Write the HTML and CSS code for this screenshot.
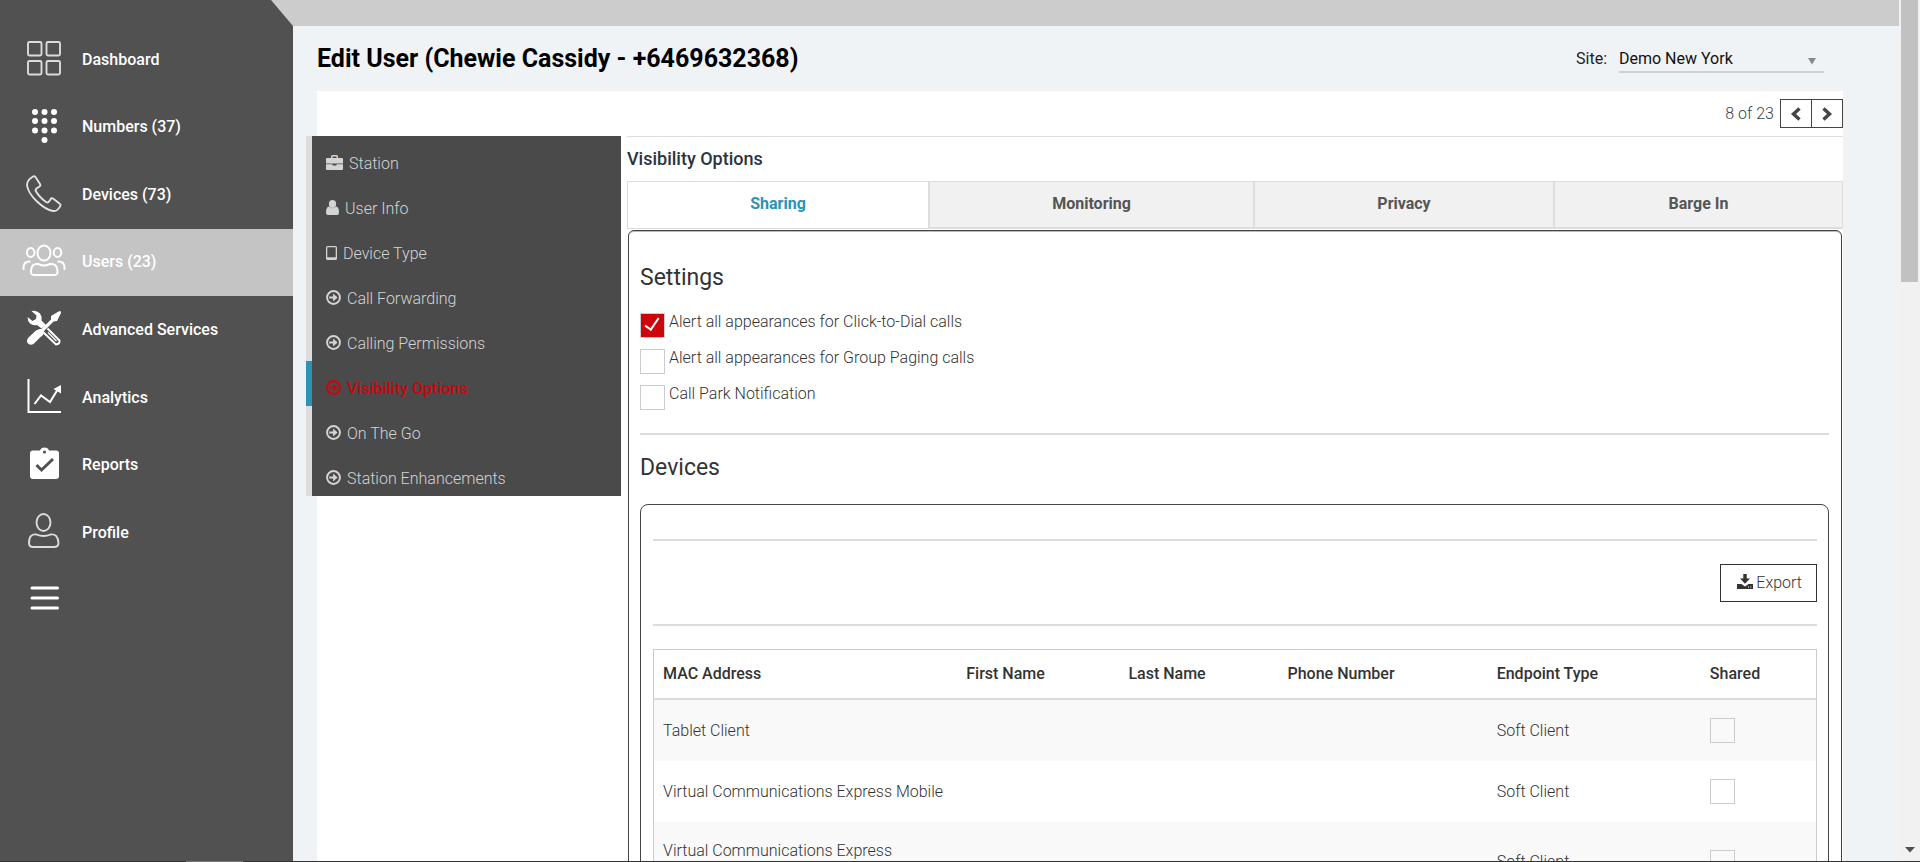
FILE: index.html
```html
<!DOCTYPE html>
<html lang="en">
<head>
<meta charset="utf-8">
<title>Edit User</title>
<link rel="stylesheet" href="styles.css">
</head>
<body>
<svg class="defs" aria-hidden="true">
  <symbol id="circle-arrow" viewBox="0 0 14 14">
    <circle cx="7" cy="7" r="6" fill="none" stroke="currentColor" stroke-width="1.8"/>
    <path d="M3 6h3.600V3.200L10.800 7l-4.200 3.800V8H3z" fill="currentColor"/>
  </symbol>
</svg>
<div class="app">
  <nav class="sidebar" aria-label="Main">
    <ul class="nav">
      <li><a class="nav-link" href="#">
        <svg viewBox="0 0 44 36"><g fill="none" stroke="#dcdcdc" stroke-width="1.9"><rect x="6" y="2" width="13.500" height="13.500" rx="1.5"/><rect x="24.500" y="2" width="13.500" height="13.500" rx="1.5"/><rect x="6" y="21" width="13.500" height="13.500" rx="1.5"/><rect x="24.500" y="21" width="13.500" height="13.500" rx="1.5"/></g></svg>
        Dashboard</a></li>
      <li><a class="nav-link" href="#">
        <svg viewBox="0 0 44 36"><g fill="#fff"><circle cx="13" cy="4" r="3"/><circle cx="22.500" cy="4" r="3"/><circle cx="32" cy="4" r="3"/><circle cx="13" cy="13" r="3"/><circle cx="22.500" cy="13" r="3"/><circle cx="32" cy="13" r="3"/><circle cx="13" cy="22.500" r="3"/><circle cx="22.500" cy="22.500" r="3"/><circle cx="32" cy="22.500" r="3"/><circle cx="22.500" cy="32" r="3"/></g></svg>
        Numbers (37)</a></li>
      <li><a class="nav-link" href="#">
        <svg viewBox="0 0 44 36"><path d="M11 1.500Q5 5 5 10Q6 18 15 26.500T31 36Q36 36.500 38.500 30.500Q39 29.500 37.500 28.500L31 23.500Q29.500 22.500 28.500 24.500L26.500 27Q25.500 28 24 27Q17 22 13.500 15.500Q13.500 14.500 14.500 13.500L17.500 11.500Q19 10.500 18 9L13.500 2Q12.500 .8 11 1.500Z" fill="none" stroke="#e2e2e2" stroke-width="1.900"/></svg>
        Devices (73)</a></li>
      <li><a class="nav-link active" href="#" aria-current="page">
        <svg viewBox="0 0 44 36"><g fill="none" stroke="#fff" stroke-width="2"><ellipse cx="22" cy="10" rx="6.500" ry="7.500"/><ellipse cx="8.700" cy="9.500" rx="3.800" ry="4.500"/><ellipse cx="35.500" cy="9.500" rx="3.800" ry="4.500"/><path d="M16 21Q9.500 20 9 28Q8.500 32 12 32H32.500Q36 32 35.500 28Q35 20 28 21Q22 24 16 21ZM1.500 27V24Q2 18 8.500 18.500M42.500 27V24Q42 18 35.500 18.500"/></g></svg>
        Users (23)</a></li>
      <li><a class="nav-link" href="#">
        <svg viewBox="0 0 44 36"><path d="M9.500 1Q14.500 0 18 3.500Q20.500 7 19.500 10.500L24 15L19.500 18.500L15 15Q11 16 8 13.500Q5.500 11 5.500 7L10.500 11L14 9L14.500 5.500Z" fill="#fff"/><path d="M25.500 18.500L37.500 30.500Q38 34 34 34.500L21.500 22.500" fill="none" stroke="#fff" stroke-width="2"/><path d="M26 22.500L34.500 31" stroke="#fff" stroke-width="1.300"/><path d="M38.500 1L39 3L35 11L31.500 11.500L22 21Q22 25 18.500 27L11.500 34Q8 36 5.500 33Q4 30 7 27L14 20.500Q17 18.500 19.500 19L29 9.500V6L36.500 1.500Z" fill="#fff"/></svg>
        Advanced Services</a></li>
      <li><a class="nav-link" href="#">
        <svg viewBox="0 0 44 36"><path d="M6.500 1V34H39" fill="none" stroke="#fff" stroke-width="2"/><path d="M12.500 26L19 17.500L28 24L36 11" fill="none" stroke="#fff" stroke-width="2"/><path d="M39 7V15.500L31.500 11Z" fill="#fff"/></svg>
        Analytics</a></li>
      <li><a class="nav-link" href="#">
        <svg viewBox="0 0 44 36"><path d="M11 4.500H18Q19 1.500 22.500 1.500T27 4.500H34Q37 4.500 37 7.500V30Q37 33 34 33H11Q8 33 8 30V7.500Q8 4.500 11 4.500Z" fill="#fff"/><circle cx="22.500" cy="6" r="1.600" fill="#515151"/><path d="M14.500 19L19.500 24L31 13" fill="none" stroke="#515151" stroke-width="3"/></svg>
        Reports</a></li>
      <li><a class="nav-link" href="#">
        <svg viewBox="0 0 44 36"><g fill="none" stroke="#dcdcdc" stroke-width="1.9"><ellipse cx="21.500" cy="9.500" rx="7" ry="8.500"/><path d="M14.500 21.500Q7 20.500 7 30Q7 34 11 34H32Q36.500 34 36.500 30Q36 20.500 28.500 21.500Q21.500 24.500 14.500 21.500Z"/></g></svg>
        Profile</a></li>
      <li><button class="nav-link" type="button" aria-label="Menu">
        <svg viewBox="0 0 44 36"><path d="M10 7H35.500M10 17H35.500M10 27H35.500" stroke="#fff" stroke-width="3" stroke-linecap="round"/></svg></button></li>
    </ul>
  </nav>

  <div class="page">
    <div class="topband"></div>
    <header class="page-head">
      <h1>Edit User (Chewie Cassidy - +6469632368)</h1>
      <div class="site">
        <label for="site">Site:</label>
        <div class="site-box">
          <select id="site"><option>Demo New York</option></select>
          <svg viewBox="0 0 8 8"><path d="M0 1H8L4 7.500Z" fill="#888"/></svg>
        </div>
      </div>
    </header>

    <main class="panel">
      <div class="pager">
        <span>8 of 23</span>
        <div class="pager-buttons">
          <button type="button" aria-label="Previous"><svg viewBox="0 0 12 14"><path d="M9.500 1.500L3.500 7L9.500 12.500" fill="none" stroke="#444" stroke-width="3.400"/></svg></button><button type="button" aria-label="Next"><svg viewBox="0 0 12 14"><path d="M2.500 1.500L8.500 7L2.500 12.500" fill="none" stroke="#444" stroke-width="3.400"/></svg></button>
        </div>
      </div>
      <div class="columns">
        <nav class="submenu" aria-label="User settings">
          <a href="#"><svg class="w17" viewBox="0 0 17 15"><path d="M1 3H5V1.500Q5 0 6.500 0H10.500Q12 0 12 1.500V3H16Q17 3 17 4V8.500H0V4Q0 3 1 3ZM6.500 3H10.500V1.500H6.500ZM0 9.300H6.500V10.500H10.500V9.300H17V14Q17 15 16 15H1Q0 15 0 14Z" fill="currentColor" fill-rule="evenodd"/></svg>Station</a>
          <a href="#"><svg class="w13" viewBox="0 0 13 15"><ellipse cx="6.500" cy="4" rx="3.600" ry="4" fill="currentColor"/><path d="M3 6.500Q6.500 10 10 6.500Q13 7 13 12.500Q13 15 11 15H2Q0 15 0 12.500Q0 7 3 6.500Z" fill="currentColor"/></svg>User Info</a>
          <a href="#"><svg class="w11" viewBox="0 0 11 14"><path d="M1.500 0H9.500Q11 0 11 1.500V12.500Q11 14 9.500 14H1.500Q0 14 0 12.500V1.500Q0 0 1.500 0ZM1.300 1.300V11.300H9.700V1.300Z" fill="currentColor" fill-rule="evenodd"/></svg>Device Type</a>
          <a href="#"><svg class="w15" viewBox="0 0 14 14"><use href="#circle-arrow"/></svg>Call Forwarding</a>
          <a href="#"><svg class="w15" viewBox="0 0 14 14"><use href="#circle-arrow"/></svg>Calling Permissions</a>
          <a href="#" class="active" aria-current="true"><svg class="w15" viewBox="0 0 14 14"><use href="#circle-arrow"/></svg>Visibility Options</a>
          <a href="#"><svg class="w15" viewBox="0 0 14 14"><use href="#circle-arrow"/></svg>On The Go</a>
          <a href="#"><svg class="w15" viewBox="0 0 14 14"><use href="#circle-arrow"/></svg>Station Enhancements</a>
        </nav>

        <section class="content">
          <h2>Visibility Options</h2>
          <div class="tabs" role="tablist">
            <button type="button" role="tab" aria-selected="true">Sharing</button>
            <button type="button" role="tab" aria-selected="false">Monitoring</button>
            <button type="button" role="tab" aria-selected="false">Privacy</button>
            <button type="button" role="tab" aria-selected="false">Barge In</button>
          </div>
          <div class="box outer">
            <h3>Settings</h3>
            <div class="checks">
              <div class="check"><input type="checkbox" id="c1" checked><label for="c1">Alert all appearances for Click-to-Dial calls</label></div>
              <div class="check"><input type="checkbox" id="c2"><label for="c2">Alert all appearances for Group Paging calls</label></div>
              <div class="check"><input type="checkbox" id="c3"><label for="c3">Call Park Notification</label></div>
            </div>
            <hr>
            <h3>Devices</h3>
            <div class="box inner">
              <hr>
              <div class="actions">
                <button class="export" type="button"><svg viewBox="0 0 16 15"><path d="M6.300 0H9.700V4.500H13L8 9.800L3 4.500H6.300ZM0 10H4.500L8 12.500L11.500 10H16V15H0Z" fill="#333"/><path d="M11 13h1M13.300 13h1" stroke="#fff"/></svg>Export</button>
              </div>
              <hr>
              <table>
                <colgroup><col class="c-mac"><col class="c-first"><col class="c-last"><col class="c-phone"><col class="c-type"><col class="c-shared"></colgroup>
                <thead><tr><th>MAC Address</th><th>First Name</th><th>Last Name</th><th>Phone Number</th><th>Endpoint Type</th><th>Shared</th></tr></thead>
                <tbody>
                  <tr><td>Tablet Client</td><td></td><td></td><td></td><td>Soft Client</td><td><input type="checkbox" aria-label="Shared"></td></tr>
                  <tr><td>Virtual Communications Express Mobile</td><td></td><td></td><td></td><td>Soft Client</td><td><input type="checkbox" aria-label="Shared"></td></tr>
                  <tr><td>Virtual Communications Express<br>&nbsp;</td><td></td><td></td><td></td><td>Soft Client</td><td><input type="checkbox" aria-label="Shared"></td></tr>
                </tbody>
              </table>
            </div>
          </div>
        </section>
      </div>
    </main>
  </div>

  <div class="scrollbar" aria-hidden="true">
    <div class="thumb"></div>
    <svg viewBox="0 0 10 6"><path d="M0 0H10L5 5.500Z" fill="#505050"/></svg>
  </div>
  <div class="bottom-line"><div></div></div>
</div>
</body>
</html>
```

FILE: styles.css
```css
* { box-sizing: border-box; }

body {
  margin: 0;
  overflow: hidden;
  background: #eff3f6;
  color: #333;
  font: 300 16px/24px Roboto, "Liberation Sans", sans-serif;
}

h1, h2, h3, ul { margin: 0; padding: 0; }
ul { list-style: none; }
a { color: inherit; text-decoration: none; }
button, select { font: inherit; color: inherit; background: none; border: 0; border-radius: 0; padding: 0; }
svg { display: block; flex: none; }
.defs { display: none; }

.app {
  display: grid;
  grid-template-columns: 293px 1fr 21px;
  grid-template-rows: minmax(0, 1fr) 1px;
  height: 100vh;
  overflow: hidden;
}

/* Sidebar */
.sidebar {
  z-index: 1;
  padding-top: 26px;
  background: #515151;
  clip-path: polygon(0 0, 271px 0, 293px 26px, 100% 100%, 0 100%);
}
.nav { display: grid; grid-template-rows: repeat(9, 1fr); height: 608px; }
.nav-link {
  display: flex;
  align-items: center;
  gap: 16px;
  width: 100%;
  height: 100%;
  padding-left: 22px;
  color: #fff;
  font-weight: 500;
}
.nav-link svg { width: 44px; height: 36px; margin-bottom: 3px; overflow: visible; }
.nav-link.active { background: #c4c4c4; }

/* Page */
.page { display: flex; flex-direction: column; min-height: 0; min-width: 0; }
.topband { flex: none; height: 26px; margin-left: -22px; background: #ccc; }
.page-head {
  flex: none;
  display: flex;
  justify-content: space-between;
  align-items: center;
  height: 65px;
  padding: 0 75px 0 24px;
  color: #000;
}
h1 { font-size: 25px; line-height: 32px; font-weight: 700; }
.site { display: flex; align-items: center; gap: 12px; font-weight: 400; color: #222; }
.site-box { display: flex; align-items: center; width: 205px; border-bottom: 2px solid #ccd1d3; padding: 2px 8px 0 0; }
.site-box select { flex: 1; appearance: none; height: 24px; color: #111; }
.site-box svg { width: 8px; height: 8px; margin-top: 4px; }

.panel { flex: 1; min-height: 0; margin: 0 56px 0 24px; background: #fff; }
.pager { display: flex; justify-content: flex-end; align-items: center; gap: 6px; height: 45px; color: #3a424c; }
.pager-buttons { display: flex; }
.pager button { display: grid; place-items: center; width: 32px; height: 29px; border: 1px solid #444; }
.pager button + button { margin-left: -1px; }
.pager button svg { width: 12px; height: 14px; }

.columns { display: flex; align-items: flex-start; gap: 6px; }

/* Settings menu */
.submenu { flex: none; width: 315px; margin-left: -11px; background: #4a4a4a; color: #d4d4d4; }
.submenu a { display: flex; align-items: center; gap: 6px; height: 45px; padding: 11px 0 0 14px; border-left: 6px solid #dcdcdc; }
.submenu a svg { margin-bottom: 3px; }
.submenu .active { border-color: #2b93b5; color: #cd040b; font-weight: 500; }
.w17 { width: 17px; height: 15px; }
.w15 { width: 15px; height: 15px; }
.w13 { width: 13px; height: 15px; }
.w11 { width: 11px; height: 14px; }

/* Content */
.content { flex: 1; min-width: 0; border-top: 1px solid #ddd; }
h2 { padding: 10px 0 10px; color: #2b343e; font-size: 18px; line-height: 24px; font-weight: 500; }
.tabs { display: grid; grid-template-columns: 301fr 325fr 300fr 290fr; margin-bottom: 1px; }
.tabs button {
  height: 48px;
  padding-bottom: 2px;
  border: solid #ddd;
  border-width: 1px 0 2px 2px;
  background: #f1f1f1;
  color: #555;
  font-weight: 700;
}
.tabs button[aria-selected="true"] { border-left-width: 1px; border-bottom-width: 1px; background: #fff; color: #2b93b5; }
.tabs button:last-child { border-right-width: 1px; }

.box { border: 1px solid #444; background: #fff; }
.outer { margin: 0 1px; padding: 31px 12px 40px 11px; border-radius: 6px; box-shadow: inset 0 2px 0 -1px #bbb; }
.inner { padding: 34px 11px 40px 12px; border-radius: 8px; }
h3 { color: #333; font-size: 23px; line-height: 32px; font-weight: 400; }
hr { height: 2px; margin: 0; border: 0; background: #dcdcdc; }

input[type="checkbox"] {
  appearance: none;
  display: grid;
  place-items: center;
  width: 25px;
  height: 25px;
  margin: 0;
  border: 1px solid #ccc;
  background: none;
}
input[type="checkbox"]:checked { background: #cd040b; }
input[type="checkbox"]:checked::before {
  content: "";
  width: 6px;
  height: 13px;
  margin: 0 2px 6px 0;
  border: solid #fff;
  border-width: 0 2px 2px 0;
  transform: rotate(34deg);
}
.checks { display: grid; gap: 11px; padding: 19px 0 23px; }
.check { display: flex; gap: 4px; }
.check label { line-height: 18px; }
.outer > hr + h3 { padding: 17px 0 20px; }

.actions { display: flex; justify-content: flex-end; padding: 23px 0 22px; }
.export { display: flex; align-items: center; gap: 3px; height: 38px; padding: 0 14px 0 16px; border: 1px solid #333; }
.export svg { width: 16px; height: 15px; margin-bottom: 3px; }

table { width: 100%; margin-top: 23px; table-layout: fixed; border-collapse: separate; border-spacing: 0; border: 1px solid #ccc; }
th, td { padding: 0 0 0 9px; text-align: left; }
th { height: 50px; color: #333; font-weight: 500; border-bottom: 2px solid #dcdcdc; }
td { height: 61px; }
tbody tr:nth-child(odd) { background: #f9f9f9; }
tbody tr:nth-child(3) td { height: 80px; line-height: 22px; }
.c-mac { width: 303px; }
.c-first { width: 162px; }
.c-last { width: 159px; }
.c-phone { width: 209px; }
.c-type { width: 213px; }
.c-shared { width: 115px; }

/* Window edges */
.scrollbar { display: flex; flex-direction: column; justify-content: space-between; padding: 0 2px 8px; background: #f1f1f1; }
.thumb { height: 282px; background: #c1c1c1; }
.scrollbar svg { width: 10px; height: 6px; margin: 0 auto; }
.bottom-line { grid-column: 1 / -1; padding-left: 186px; background: #333; z-index: 1; }
.bottom-line div { width: 57px; height: 1px; background: #777; }
```
